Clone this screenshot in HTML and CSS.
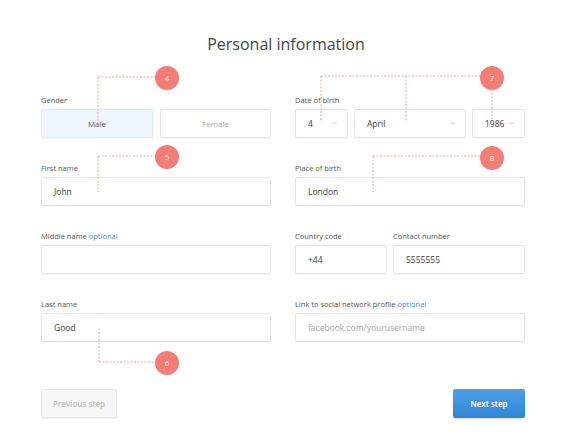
FILE: index.html
```html
<!DOCTYPE html>
<html lang="en">
<head>
    <meta charset="UTF-8">
    <meta name="viewport" content="width=device-width, initial-scale=1.0">
    <title>Personal information</title>
    <link rel="stylesheet" href="styles.css">
</head>
<body>

    <div class="page">
        <h1 class="title">Personal information</h1>

        <div class="grid">
            <!-- Gender -->
            <div class="field">
                <label>Gender</label>
                <div class="toggle">
                    <div class="box option active">Male</div>
                    <div class="box option">Female</div>
                </div>
            </div>

            <!-- Date of birth -->
            <div class="field">
                <label>Date of birth</label>
                <div class="date">
                    <div class="box select">4 <span class="caret"></span></div>
                    <div class="box select">April <span class="caret"></span></div>
                    <div class="box select">1986 <span class="caret"></span></div>
                </div>
            </div>

            <div class="field">
                <label>First name</label>
                <div class="box input">John</div>
            </div>

            <div class="field">
                <label>Place of birth</label>
                <div class="box input">London</div>
            </div>

            <div class="field">
                <label>Middle name <span class="optional">optional</span></label>
                <div class="box input"></div>
            </div>

            <div class="field phone">
                <div>
                    <label>Country code</label>
                    <div class="box input">+44</div>
                </div>
                <div>
                    <label>Contact number</label>
                    <div class="box input">5555555</div>
                </div>
            </div>

            <div class="field">
                <label>Last name</label>
                <div class="box input">Good</div>
            </div>

            <div class="field">
                <label>Link to social network profile <span class="optional">optional</span></label>
                <div class="box input placeholder">facebook.com/yourusername</div>
            </div>
        </div>

        <div class="actions">
            <button class="btn prev">Previous step</button>
            <button class="btn next">Next step</button>
        </div>

        <!-- Numbered callouts -->
        <svg class="notes" width="572" height="443" viewBox="0 0 572 443">
            <g class="lines">
                <path d="M98 77 H160 M98 77 V125" />
                <path d="M98 156 H160 M98 156 V192" />
                <path d="M99 362 H160 M99 362 V328" />
                <path d="M321 76 H485 M321 76 V122 M406 76 V122 M492 86 V127" />
                <path d="M373 156 H485 M373 156 V192" />
            </g>
            <g class="dots">
                <circle cx="167" cy="78" r="12" />
                <circle cx="167" cy="157" r="12" />
                <circle cx="167" cy="363" r="12" />
                <circle cx="492" cy="78" r="12" />
                <circle cx="492" cy="158" r="12" />
            </g>
            <g class="nums">
                <text x="167" y="81">4</text>
                <text x="167" y="160">5</text>
                <text x="167" y="366">6</text>
                <text x="492" y="81">7</text>
                <text x="492" y="161">8</text>
            </g>
        </svg>
    </div>

</body>
</html>
```

FILE: styles.css
```css
body {
    margin: 0;
    background-color: #fff;
    font-family: 'Open Sans', 'Liberation Sans', sans-serif;
    color: #444;
}

.page {
    position: relative;
    width: 572px;
    height: 443px;
    overflow: hidden;
    padding-top: 34px;
    box-sizing: border-box;
}

.title {
    margin: 0 0 41px;
    font-size: 16px;
    line-height: 20px;
    font-weight: 400;
    text-align: center;
    color: #444;
}

.grid {
    display: grid;
    grid-template-columns: 230px 230px;
    column-gap: 24px;
    row-gap: 25px;
    margin-left: 41px;
}

label {
    display: block;
    height: 10px;
    margin-bottom: 4px;
    font-size: 7.5px;
    line-height: 10px;
    color: #555;
}

.optional {
    color: #3b8ed9;
}

.box {
    height: 29px;
    box-sizing: border-box;
    border: 1px solid #e3e3e3;
    border-radius: 2px;
    background-color: #fff;
    box-shadow: 0 1px 1px rgba(0, 0, 0, 0.03);
    display: flex;
    align-items: center;
    font-size: 8.5px;
    color: #3a3a3a;
}

.input {
    padding-left: 12px;
}

.placeholder {
    color: #a8a8a8;
}

/* Gender switch */
.toggle {
    display: grid;
    grid-template-columns: 112px 111px;
    column-gap: 7px;
}

.option {
    justify-content: center;
    color: #aaa;
    font-size: 8px;
}

.option.active {
    background-color: #eef5fd;
    border-color: #dfe9f4;
    color: #555;
}

/* Date selects */
.date {
    display: grid;
    grid-template-columns: 53px 112px 53px;
    column-gap: 6px;
}

.select {
    justify-content: space-between;
    padding: 0 10px 0 12px;
}

.caret {
    width: 4px;
    height: 4px;
    border-right: 1px solid #bbb;
    border-bottom: 1px solid #bbb;
    transform: scale(0.8, 0.5) rotate(45deg);
    margin-top: -2px;
}

.phone {
    display: grid;
    grid-template-columns: 92px 132px;
    column-gap: 6px;
}

/* Step buttons */
.actions {
    display: flex;
    justify-content: space-between;
    width: 484px;
    margin: 47px 0 0 41px;
}

.btn {
    height: 29px;
    padding: 0;
    border-radius: 2px;
    font-family: inherit;
    font-size: 8px;
    font-weight: 600;
    cursor: pointer;
}

.btn.prev {
    width: 76px;
    border: 1px solid #e6e6e6;
    background-color: #f6f6f6;
    color: #bdbdbd;
    box-shadow: 0 1px 1px rgba(0, 0, 0, 0.05);
}

.btn.next {
    width: 72px;
    border: none;
    background: linear-gradient(#4d9fe6, #2f85d8);
    color: #fff;
    box-shadow: 0 1px 2px rgba(0, 0, 0, 0.15);
}

/* Callout overlay */
.notes {
    position: absolute;
    top: 0;
    left: 0;
    pointer-events: none;
}

.notes .lines path {
    fill: none;
    stroke: #f1a5a2;
    stroke-width: 1;
    stroke-dasharray: 2 1.5;
}

.notes .dots circle {
    fill: #f27c76;
}

.notes .nums text {
    fill: #fde9e8;
    font-family: 'Open Sans', sans-serif;
    font-size: 8px;
    text-anchor: middle;
}
```
